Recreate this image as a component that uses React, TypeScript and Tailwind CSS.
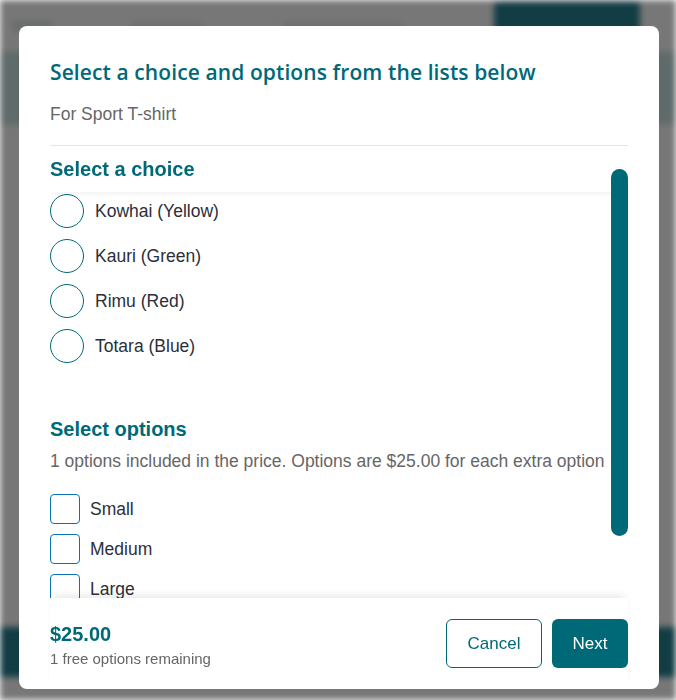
import React, { useState } from 'react';

const choices = ['Kowhai (Yellow)', 'Kauri (Green)', 'Rimu (Red)', 'Totara (Blue)'];
const options = ['Small', 'Medium', 'Large'];

// Page behind the dialog, already dimmed and blurred
function BackgroundPage() {
  return (
    <div className="min-h-[700px] bg-[#777777] blur-[3px]">
      <div className="flex items-center h-[52px] px-3 gap-20">
        <div className="w-[40px] h-[12px] bg-[#6a6e6e]" />
        <div className="w-[70px] h-[10px] bg-[#6e7070]" />
        <div className="w-[120px] h-[10px] bg-[#6e7070]" />
        <div className="ml-auto w-[146px] h-[38px] -mt-[10px] mr-[24px] rounded bg-[#123d45]" />
      </div>
      <div className="h-[72px] bg-[#5f6a6a]" />
      <div className="h-[503px]" />
      <div className="h-[50px] bg-[#123d45]" />
    </div>
  );
}

export default function App() {
  const [choice, setChoice] = useState<string>('');
  const [picked, setPicked] = useState<string[]>([]);

  const toggle = (o: string) =>
    setPicked(picked.includes(o) ? picked.filter((p) => p !== o) : [...picked, o]);

  return (
    <div className="relative w-[676px] h-[700px] overflow-hidden font-['Liberation_Sans',Arial,sans-serif]">
      <BackgroundPage />

      <div className="absolute inset-0 flex justify-center pt-[26px]">
        <div className="w-[640px] h-[663px] ml-[2px] bg-white rounded-lg flex flex-col px-[31px] overflow-hidden">
          <div className="pt-[32px]">
            <h2 className="text-[#006978] text-[21px] leading-[28px] font-semibold font-['Open_Sans',sans-serif] tracking-[0.1px]">
              Select a choice and options from the lists below
            </h2>
            <p className="mt-[16px] text-[#666666] text-[17.5px] leading-[24px]">For Sport T-shirt</p>
          </div>
          <div className="mt-[19px] border-t border-[#e3e5ec]" />

          <div className="relative flex-1 overflow-hidden">
            {/* scrollbar thumb */}
            <div className="absolute right-0 top-[23px] w-[17px] h-[367px] rounded-full bg-[#006978] z-20" />

            <div className="sticky top-0 z-10 bg-white h-[46px] flex items-center shadow-[0_4px_6px_-3px_rgba(0,0,0,0.08)]">
              <h3 className="text-[#006978] text-[20px] font-bold leading-[24px]">Select a choice</h3>
            </div>

            <div className="flex flex-col gap-[11px] pt-[2px]">
              {choices.map((c) => (
                <label key={c} className="flex items-center gap-[11px] cursor-pointer">
                  <span
                    onClick={() => setChoice(c)}
                    className="w-[34px] h-[34px] rounded-full border border-[#006978] flex items-center justify-center"
                  >
                    {choice === c && <span className="w-[18px] h-[18px] rounded-full bg-[#006978]" />}
                  </span>
                  <span className="text-[#2b2f3a] text-[17.5px]">{c}</span>
                </label>
              ))}
            </div>

            <h3 className="mt-[54px] text-[#006978] text-[20px] font-bold leading-[24px]">Select options</h3>
            <p className="mt-[8px] text-[#666666] text-[17.5px] leading-[24px]">
              1 options included in the price. Options are $25.00 for each extra option
            </p>

            <div className="mt-[21px] flex flex-col gap-[10px]">
              {options.map((o) => (
                <label key={o} className="flex items-center gap-[10px] cursor-pointer">
                  <span
                    onClick={() => toggle(o)}
                    className="w-[30px] h-[30px] rounded-[4px] border border-[#0b73b5] flex items-center justify-center text-[#0b73b5]"
                  >
                    {picked.includes(o) && '✓'}
                  </span>
                  <span className="text-[#2b2f3a] text-[17.5px]">{o}</span>
                </label>
              ))}
            </div>
          </div>

          <div className="h-[91px] shrink-0 flex items-center bg-white shadow-[0_-6px_8px_-4px_rgba(0,0,0,0.1)] relative z-30">
            <div className="flex flex-col mt-[4px]">
              <span className="text-[#006978] text-[20px] font-bold leading-[24px]">$25.00</span>
              <span className="text-[#666666] text-[15px] leading-[20px] mt-[3px]">1 free options remaining</span>
            </div>
            <div className="ml-auto flex gap-[10px]">
              <button className="w-[96px] h-[49px] rounded-md border border-[#006978] text-[#006978] text-[17px]">
                Cancel
              </button>
              <button className="w-[76px] h-[49px] rounded-md bg-[#006978] text-white text-[17px]">Next</button>
            </div>
          </div>
        </div>
      </div>
    </div>
  );
}
